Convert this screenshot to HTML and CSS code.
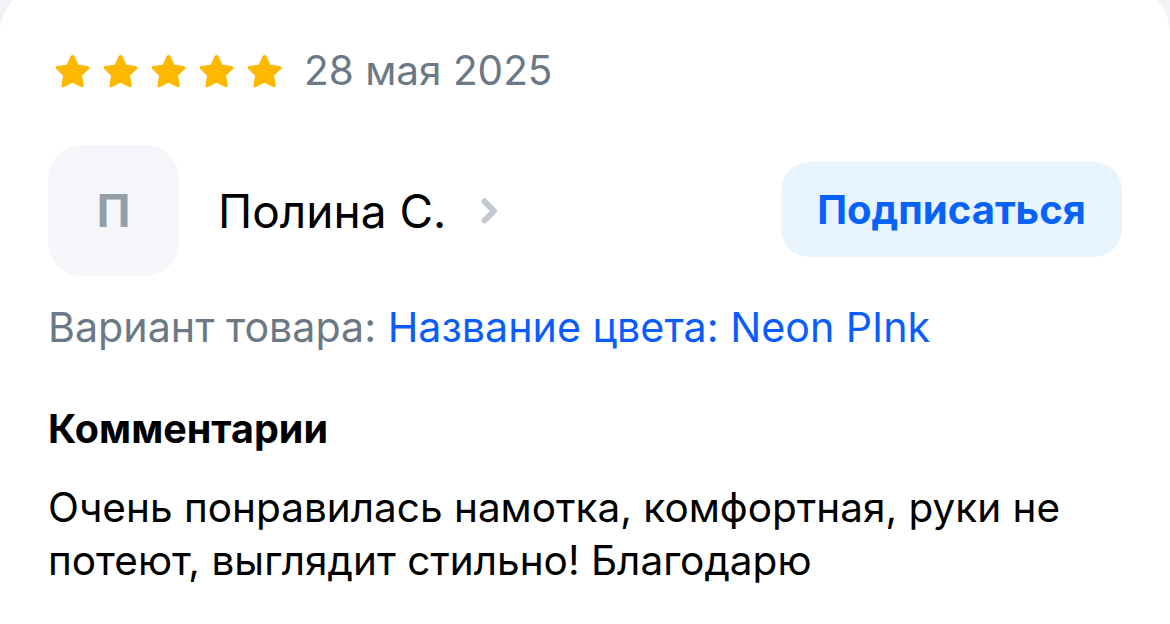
FILE: index.html
```html
<!DOCTYPE html>
<html lang="ru">
<head>
<meta charset="utf-8">
<link rel="stylesheet" href="styles.css">
</head>
<body>
<div class="card">
  <div class="rating-row">
    <div class="stars">
      <svg class="star" viewBox="0 0 24 24"><path d="M12 1.8c.5 0 .9.3 1.1.7l2.6 5.3 5.8.8c.9.1 1.3 1.3.6 1.9l-4.2 4.1 1 5.8c.2.9-.8 1.6-1.6 1.2L12 18.9l-5.2 2.7c-.8.4-1.8-.3-1.6-1.2l1-5.8L2 10.5c-.7-.6-.3-1.8.6-1.9l5.8-.8 2.6-5.3c.2-.4.6-.7 1-.7z"/></svg>
      <svg class="star" viewBox="0 0 24 24"><path d="M12 1.8c.5 0 .9.3 1.1.7l2.6 5.3 5.8.8c.9.1 1.3 1.3.6 1.9l-4.2 4.1 1 5.8c.2.9-.8 1.6-1.6 1.2L12 18.9l-5.2 2.7c-.8.4-1.8-.3-1.6-1.2l1-5.8L2 10.5c-.7-.6-.3-1.8.6-1.9l5.8-.8 2.6-5.3c.2-.4.6-.7 1-.7z"/></svg>
      <svg class="star" viewBox="0 0 24 24"><path d="M12 1.8c.5 0 .9.3 1.1.7l2.6 5.3 5.8.8c.9.1 1.3 1.3.6 1.9l-4.2 4.1 1 5.8c.2.9-.8 1.6-1.6 1.2L12 18.9l-5.2 2.7c-.8.4-1.8-.3-1.6-1.2l1-5.8L2 10.5c-.7-.6-.3-1.8.6-1.9l5.8-.8 2.6-5.3c.2-.4.6-.7 1-.7z"/></svg>
      <svg class="star" viewBox="0 0 24 24"><path d="M12 1.8c.5 0 .9.3 1.1.7l2.6 5.3 5.8.8c.9.1 1.3 1.3.6 1.9l-4.2 4.1 1 5.8c.2.9-.8 1.6-1.6 1.2L12 18.9l-5.2 2.7c-.8.4-1.8-.3-1.6-1.2l1-5.8L2 10.5c-.7-.6-.3-1.8.6-1.9l5.8-.8 2.6-5.3c.2-.4.6-.7 1-.7z"/></svg>
      <svg class="star" viewBox="0 0 24 24"><path d="M12 1.8c.5 0 .9.3 1.1.7l2.6 5.3 5.8.8c.9.1 1.3 1.3.6 1.9l-4.2 4.1 1 5.8c.2.9-.8 1.6-1.6 1.2L12 18.9l-5.2 2.7c-.8.4-1.8-.3-1.6-1.2l1-5.8L2 10.5c-.7-.6-.3-1.8.6-1.9l5.8-.8 2.6-5.3c.2-.4.6-.7 1-.7z"/></svg>
    </div>
    <span class="date">28 мая 2025</span>
  </div>

  <div class="author-row">
    <div class="author">
      <div class="avatar">П</div>
      <span class="name">Полина С.</span>
      <svg class="chevron" viewBox="0 0 20 28"><path d="M4.5 4.5l9.5 9.5-9.5 9.5" fill="none" stroke="currentColor" stroke-width="6" stroke-linecap="round" stroke-linejoin="round"/></svg>
    </div>
    <button class="subscribe">Подписаться</button>
  </div>

  <p class="variant"><span class="variant-label">Вариант товара:</span> <span class="variant-value">Название цвета: Neon PInk</span></p>

  <h3 class="comments-title">Комментарии</h3>
  <p class="comment">Очень понравилась намотка, комфортная, руки не потеют, выглядит стильно! Благодарю</p>
</div>
</body>
</html>
```

FILE: styles.css
```css
* { box-sizing: border-box; }
html, body {
  margin: 0;
  padding: 0;
  background: #f2f3f7;
  height: 100%;
  overflow: hidden;
}
body {
  font-family: Inter, "Noto Sans", sans-serif;
  -webkit-font-smoothing: antialiased;
}
.card {
  margin-top: -15px;
  background: #ffffff;
  border-radius: 48px 48px 0 0;
  height: 640px;
  padding: 62px 48px 0 48px;
}
.rating-row {
  display: flex;
  align-items: center;
  gap: 20px;
}
.stars {
  display: flex;
  gap: 9px;
  padding-left: 5px;
}
.star {
  width: 39px;
  height: 39px;
  fill: #ffb800;
  display: block;
}
.date {
  font-size: 40.5px;
  color: #6b7886;
  line-height: 48px;
}
.author-row {
  display: flex;
  align-items: center;
  justify-content: space-between;
  margin-top: 50px;
}
.author {
  display: flex;
  align-items: center;
}
.avatar {
  width: 131px;
  height: 131px;
  border-radius: 34px;
  background: #f5f6fa;
  color: #939ea9;
  font-weight: 700;
  font-size: 45px;
  display: flex;
  align-items: center;
  justify-content: center;
}
.name {
  font-size: 46px;
  color: #000;
  margin-left: 39px;
}
.chevron {
  width: 20px;
  height: 28px;
  color: #c4c9cf;
  margin-left: 34px;
  display: block;
}
.subscribe {
  border: none;
  background: #e8f4fe;
  color: #0762f8;
  font-family: inherit;
  font-weight: 700;
  font-size: 40px;
  height: 95px;
  width: 341px;
  border-radius: 28px;
  padding: 0;
  margin-top: -2px;
}
.variant {
  margin: 27px 0 0 0;
  font-size: 41.2px;
  line-height: 48px;
}
.variant-label { color: #6b7886; }
.variant-value { color: #0a5cff; }
.comments-title {
  margin: 54px 0 0 0;
  font-size: 39.5px;
  font-weight: 700;
  line-height: 48px;
  color: #000;
}
.comment {
  margin: 28px 0 0 0;
  font-size: 40.5px;
  line-height: 53px;
  color: #000;
}
```
